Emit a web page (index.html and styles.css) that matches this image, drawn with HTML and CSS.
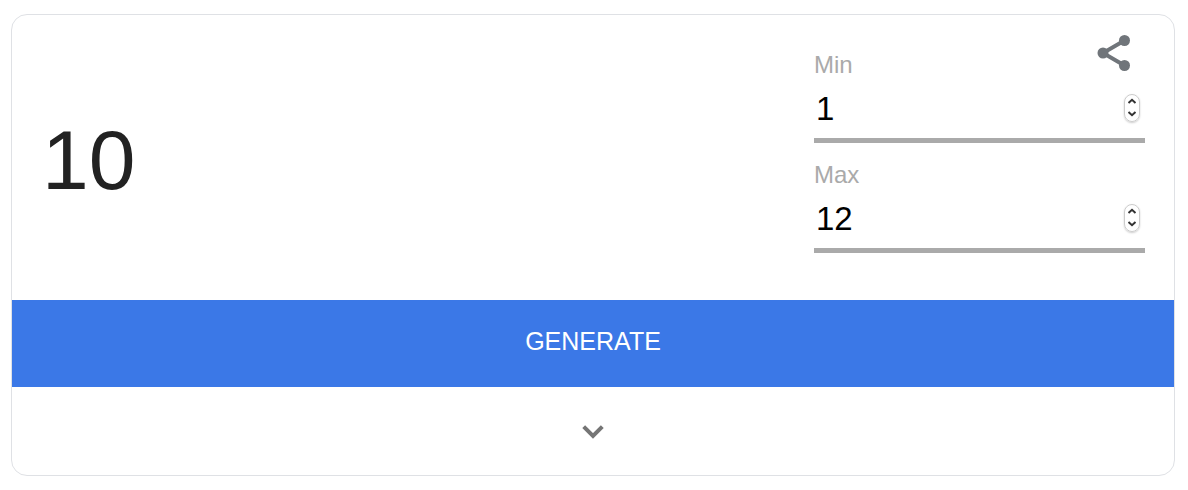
FILE: index.html
```
<!DOCTYPE html>
<html lang="en">
<head>
    <meta charset="UTF-8">
    <meta name="viewport" content="width=device-width, initial-scale=1.0">
    <title>Random number generator</title>
    <link rel="stylesheet" href="styles.css">
</head>
<body>
    <main class="card">
        <div class="top">
            <output class="result" id="result" for="min max">10</output>

            <div class="fields">
                <div class="field">
                    <label for="min">Min</label>
                    <div class="field-row">
                        <input type="number" id="min" value="1">
                        <div class="spinner">
                            <button type="button" aria-label="Increase min" onclick="step('min', 1)">
                                <svg viewBox="0 0 10 6"><path d="M1.5 5 L5 1.8 L8.5 5"/></svg>
                            </button>
                            <button type="button" aria-label="Decrease min" onclick="step('min', -1)">
                                <svg viewBox="0 0 10 6"><path d="M1.5 1 L5 4.2 L8.5 1"/></svg>
                            </button>
                        </div>
                    </div>
                </div>
                <div class="field">
                    <label for="max">Max</label>
                    <div class="field-row">
                        <input type="number" id="max" value="12">
                        <div class="spinner">
                            <button type="button" aria-label="Increase max" onclick="step('max', 1)">
                                <svg viewBox="0 0 10 6"><path d="M1.5 5 L5 1.8 L8.5 5"/></svg>
                            </button>
                            <button type="button" aria-label="Decrease max" onclick="step('max', -1)">
                                <svg viewBox="0 0 10 6"><path d="M1.5 1 L5 4.2 L8.5 1"/></svg>
                            </button>
                        </div>
                    </div>
                </div>
            </div>

            <button type="button" class="share" aria-label="Share">
                <svg viewBox="0 0 34 38">
                    <path d="M27.5 6.5 L6 19 L27.5 31.5"/>
                    <circle cx="27.5" cy="6.5" r="5.5"/>
                    <circle cx="6" cy="19" r="5.5"/>
                    <circle cx="27.5" cy="31.5" r="5.5"/>
                </svg>
            </button>
        </div>

        <button type="button" class="generate" onclick="generate()">GENERATE</button>

        <button type="button" class="more" aria-label="Show more">
            <svg viewBox="0 0 22 14"><path d="M1.7 1.7 L11 11 L20.3 1.7"/></svg>
        </button>
    </main>

    <script>
        function step(id, amount) {
            const input = document.getElementById(id);
            input.value = Number(input.value) + amount;
        }

        function generate() {
            const min = Number(document.getElementById("min").value);
            const max = Number(document.getElementById("max").value);
            if (max < min) {
                return;
            }
            document.getElementById("result").value = Math.floor(Math.random() * (max - min + 1)) + min;
        }
    </script>
</body>
</html>
```
FILE: styles.css
```
* {
    box-sizing: border-box;
}
body {
    margin: 0;
    padding: 14px 13px 14px 11px;
    background-color: #fff;
    font-family: "Liberation Sans", Arial, sans-serif;
}
button {
    margin: 0;
    padding: 0;
    border: none;
    background: none;
    font-family: inherit;
    cursor: pointer;
}
svg {
    display: block;
    fill: none;
}
.card {
    border: 1px solid #dfe1e5;
    border-radius: 16px;
    overflow: hidden;
}
.top {
    position: relative;
    display: flex;
    align-items: center;
    justify-content: space-between;
    padding: 36px 29px 47px 30px;
}
.result {
    padding-top: 16px;
    color: #222;
    font-size: 84px;
    line-height: 96px;
}
.fields {
    display: flex;
    flex-direction: column;
    gap: 18px;
    width: 30%;
    min-width: 331px;
}
.field label {
    display: block;
    color: #aaa;
    font-size: 24px;
    line-height: 28px;
}
.field-row {
    display: flex;
    align-items: center;
    height: 64px;
    padding: 0 5px 0 2px;
    border-bottom: 5px solid #aaa;
}
.field-row input {
    flex: 1;
    min-width: 0;
    padding: 0;
    border: none;
    outline: none;
    background: none;
    color: #000;
    font-family: inherit;
    font-size: 33px;
    appearance: textfield;
}
.field-row input::-webkit-inner-spin-button {
    display: none;
}
.spinner {
    display: flex;
    flex-direction: column;
    width: 16px;
    height: 28px;
    margin-bottom: 2px;
    border: 1px solid #ccc;
    border-radius: 8px;
    box-shadow: 0 1px 2px rgba(0, 0, 0, 0.2);
}
.spinner button {
    display: flex;
    flex: 1;
    align-items: center;
    justify-content: center;
}
.spinner svg {
    width: 10px;
    height: 6px;
    stroke: #333;
    stroke-width: 2;
}
.share {
    position: absolute;
    top: 19px;
    right: 43px;
}
.share svg {
    width: 34px;
    height: 38px;
    fill: #70757a;
}
.share path {
    fill: none;
    stroke: #70757a;
    stroke-width: 4;
}
.generate {
    display: block;
    width: 100%;
    padding: 26px 0 31px;
    background-color: #3b78e7;
    color: #fff;
    font-size: 25px;
    line-height: 30px;
}
.more {
    display: flex;
    align-items: center;
    justify-content: center;
    width: 100%;
    height: 88px;
    padding-top: 2px;
}
.more svg {
    width: 22px;
    height: 14px;
    stroke: #757575;
    stroke-width: 4;
}
```
